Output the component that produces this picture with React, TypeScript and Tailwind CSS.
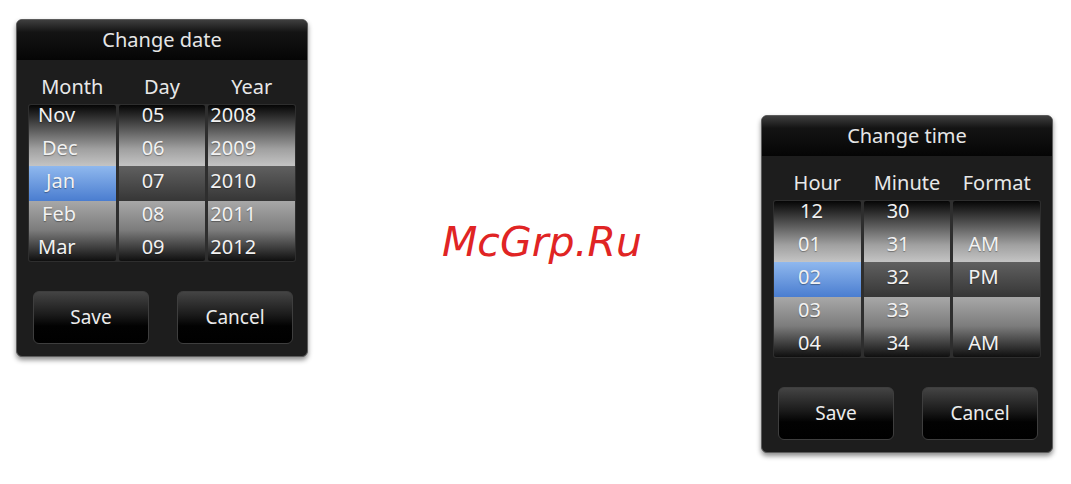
type Col = {
  header: string;
  items: string[];
  pads: number[];
  selected?: boolean;
};

const plainCol =
  "bg-[linear-gradient(to_bottom,#050505_0px,#4a4a4a_20px,#a0a0a0_44px,#c4c4c4_61px,#606060_61px,#363636_96px,#a8a8a8_96px,#7c7c7c_125px,#080808_158px)]";
const blueCol =
  "bg-[linear-gradient(to_bottom,#050505_0px,#4a4a4a_20px,#a0a0a0_44px,#c4c4c4_61px,#8fb8ee_61px,#4a7dd0_96px,#a8a8a8_96px,#7c7c7c_125px,#080808_158px)]";

const padClass: Record<number, string> = {
  2: "pl-[2px]",
  9: "pl-[9px]",
  13: "pl-[13px]",
  15: "pl-[15px]",
  17: "pl-[17px]",
  23: "pl-[23px]",
  24: "pl-[24px]",
  26: "pl-[26px]",
};

function Wheel({ col }: { col: Col }) {
  return (
    <div className={`flex-1 rounded-[2px] ${col.selected ? blueCol : plainCol}`}>
      <div className="flex flex-col">
        {col.items.map((it, i) => (
          <div
            key={i}
            className={`h-[33px] last:h-[20px] leading-[20px] text-[20px] text-[#f2f2f2] [text-shadow:0_1px_1px_rgba(0,0,0,0.35)] ${padClass[col.pads[i]]}`}
          >
            {it}
          </div>
        ))}
      </div>
    </div>
  );
}

function PickerDialog({ title, cols }: { title: string; cols: Col[] }) {
  return (
    <div className="w-[292px] rounded-[6px] border border-[#5c5c5c] bg-[#1d1d1d] shadow-[0_3px_5px_rgba(0,0,0,0.45)] font-['Noto_Sans',sans-serif] overflow-hidden">
      <div className="h-[40px] flex items-center justify-center bg-[linear-gradient(to_bottom,#3e3e3e_0px,#141414_12px,#050505_40px)] text-[20px] text-[#e6e6e6]">
        {title}
      </div>
      <div className="h-[44px] flex items-end pb-[5px] px-[12px] gap-[3px]">
        {cols.map((c) => (
          <div key={c.header} className="flex-1 text-center text-[20px] leading-[24px] text-[#e8e8e8]">
            {c.header}
          </div>
        ))}
      </div>
      <div className="mx-[11px] h-[158px] flex gap-[3px] p-[1px] rounded-[3px] bg-[#2e2e2e]">
        {cols.map((c) => (
          <Wheel key={c.header} col={c} />
        ))}
      </div>
      <div className="mt-[29px] mb-[12px] flex justify-between pl-[16px] pr-[14px]">
        {["Save", "Cancel"].map((b) => (
          <div
            key={b}
            className="w-[116px] h-[53px] flex items-center justify-center rounded-[6px] border border-[#3e3e3e] bg-[linear-gradient(to_bottom,#444_0px,#1c1c1c_22px,#020202_34px,#000_53px)] text-[19px] text-[#ececec]"
          >
            {b}
          </div>
        ))}
      </div>
    </div>
  );
}

export default function App() {
  const dateCols: Col[] = [
    { header: "Month", items: ["Nov", "Dec", "Jan", "Feb", "Mar"], pads: [9, 13, 17, 13, 9], selected: true },
    { header: "Day", items: ["05", "06", "07", "08", "09"], pads: [23, 23, 23, 23, 23] },
    { header: "Year", items: ["2008", "2009", "2010", "2011", "2012"], pads: [2, 2, 2, 2, 2] },
  ];
  const timeCols: Col[] = [
    { header: "Hour", items: ["12", "01", "02", "03", "04"], pads: [26, 24, 24, 24, 24], selected: true },
    { header: "Minute", items: ["30", "31", "32", "33", "34"], pads: [23, 23, 23, 23, 23] },
    { header: "Format", items: ["", "AM", "PM", "", "AM"], pads: [15, 15, 15, 15, 15] },
  ];
  return (
    <div className="relative w-[1071px] h-[484px] bg-white flex items-start">
      <div className="ml-[16px] mt-[19px]">
        <PickerDialog title="Change date" cols={dateCols} />
      </div>
      <div className="absolute left-[442px] top-[222px] text-[41px] leading-none italic text-[#e02424] font-['DejaVu_Sans',sans-serif]">
        McGrp.Ru
      </div>
      <div className="ml-auto mr-[18px] mt-[115px]">
        <PickerDialog title="Change time" cols={timeCols} />
      </div>
    </div>
  );
}
